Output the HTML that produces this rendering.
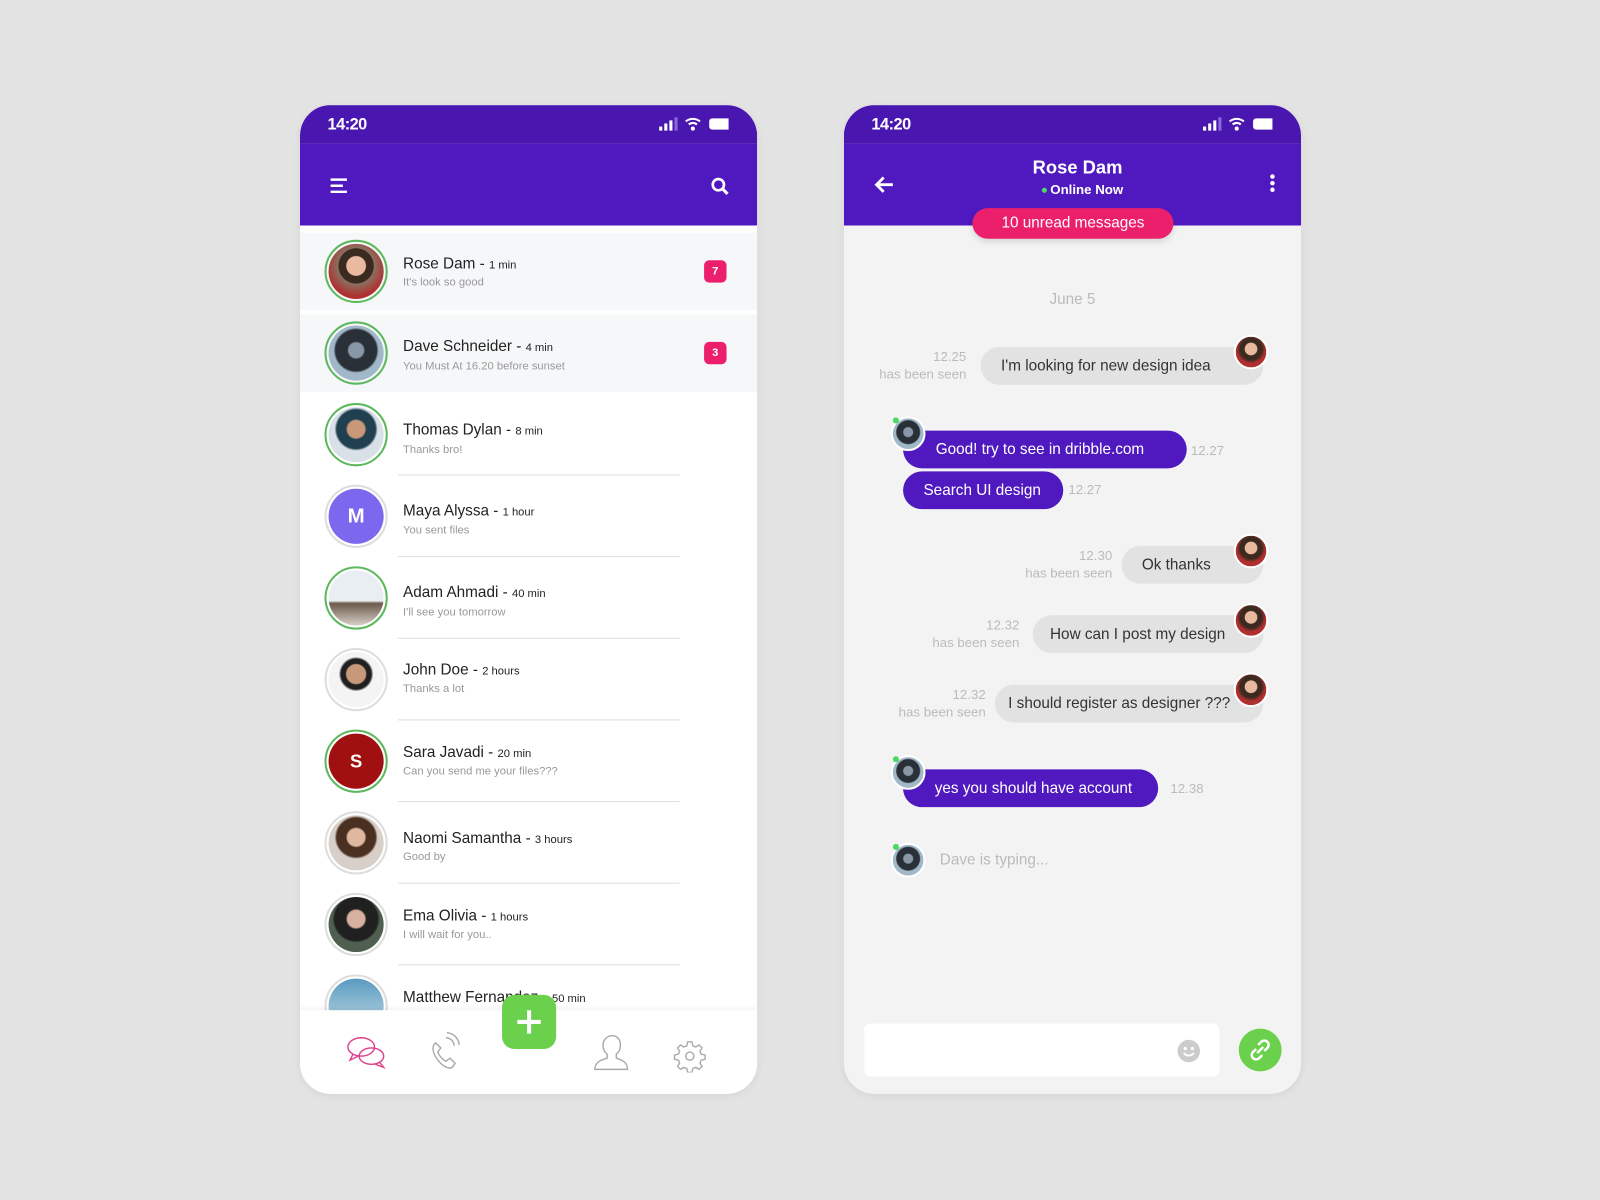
<!DOCTYPE html>
<html><head><meta charset="utf-8"><style>
*{margin:0;padding:0;box-sizing:border-box}
body{width:1600px;height:1200px;background:#e3e3e3;overflow:hidden;font-family:"Liberation Sans",sans-serif}
#w{position:absolute;left:0;top:0;width:1568px;height:1176px;transform:scale(1.020408);transform-origin:0 0}
.ph{position:absolute;top:103px;width:448px;height:969px;border-radius:30px;overflow:hidden;background:#fff;box-shadow:0 2px 8px rgba(0,0,0,.06)}
.sb{position:absolute;left:0;top:0;width:448px;height:38px;background:#4a16b0}
.hd{position:absolute;left:0;top:38px;width:448px;height:80px;background:#5019bf}
.time{position:absolute;left:27px;top:11px;color:#fff;font-weight:bold;font-size:16px;letter-spacing:-.5px}
.a{position:absolute}
.row{position:absolute;left:0;width:448px;height:76px}
.av{position:absolute;left:24px;width:62px;height:62px;border-radius:50%;border:2px solid #ddd;padding:2px}
.av.g{border-color:#5cb85c}
.av i{display:block;width:100%;height:100%;border-radius:50%}
.nm{position:absolute;left:101px;font-size:15px;color:#222}
.nm small{font-size:11px}
.sub{position:absolute;left:101px;font-size:11px;color:#999}
.dv{position:absolute;left:96px;width:276px;height:1px;background:#ddd}
.bd{position:absolute;left:396px;width:22px;height:22px;border-radius:5px;background:#ec1f6c;color:#fff;font-size:11px;font-weight:bold;text-align:center;line-height:22px}
.bub{position:absolute;height:37px;border-radius:19px;font-size:15px;line-height:37px;padding:0 20px;white-space:nowrap}
.gr{background:#e2e2e2;color:#333}
.pu{background:#5019bf;color:#fff}
.ts{position:absolute;font-size:13px;color:#bbb;text-align:right;line-height:17px}
.sav{position:absolute;width:34px;height:34px;border-radius:50%;border:2px solid #fff}
</style></head><body><div id="w">

<!-- LEFT PHONE -->
<div class="ph" style="left:294px">
 <div class="sb"></div><div class="hd"></div>
 <div class="time">14:20</div>
 <svg class="a" style="left:350px;top:10px" width="70" height="18"><rect x="2" y="11" width="3" height="4" fill="#fff"/><rect x="7" y="8" width="3" height="7" fill="#fff"/><rect x="12" y="5" width="3" height="10" fill="#fff"/><rect x="17" y="2" width="3" height="13" fill="#8a6ad8"/><path d="M28 6a11 11 0 0 1 14 0M31 9a6 6 0 0 1 8 0" stroke="#fff" stroke-width="2" fill="none"/><circle cx="35" cy="13" r="2" fill="#fff"/><rect x="51" y="3" width="25" height="11" rx="3" fill="#fff"/></svg>
 <svg class="a" style="left:28px;top:70px" width="20" height="20"><path d="M2 3h16M2 9h12M2 15h16" stroke="#fff" stroke-width="2.4"/></svg>
 <svg class="a" style="left:402px;top:70px" width="20" height="20"><circle cx="8" cy="8" r="5.5" stroke="#fff" stroke-width="2.6" fill="none"/><path d="M12 12l5 5" stroke="#fff" stroke-width="3"/></svg>
 <div class="a" style="left:0;top:125px;width:448px;height:76px;background:#f6f7f9"></div>
 <div class="a" style="left:0;top:205px;width:448px;height:76px;background:#f6f7f9"></div>

 <div class="av g" style="top:132px"><i style="background:radial-gradient(circle at 50% 40%,#e9b9a0 0 22%,#3a2a20 24% 40%,#8a7060 42%,#b03030 70%)"></i></div>
 <div class="nm" style="top:147px">Rose Dam - <small>1 min</small></div><div class="sub" style="top:168px">It's look so good</div><div class="bd" style="top:152px">7</div>
 <div class="av g" style="top:212px"><i style="background:radial-gradient(circle at 50% 45%,#8898a8 0 18%,#2a3038 22% 50%,#a0b8c8 55%)"></i></div>
 <div class="nm" style="top:228px">Dave Schneider - <small>4 min</small></div><div class="sub" style="top:250px">You Must At 16.20 before sunset</div><div class="bd" style="top:232px">3</div>

 <div class="av g" style="top:292px"><i style="background:radial-gradient(circle at 50% 40%,#c89878 0 20%,#204050 24% 45%,#d8e0e8 50%)"></i></div>
 <div class="nm" style="top:310px">Thomas Dylan - <small>8 min</small></div><div class="sub" style="top:332px">Thanks bro!</div><div class="dv" style="top:362px"></div>
 <div class="av" style="top:372px;border-color:#ddd"><i style="background:#7b68ee;color:#fff;font-weight:bold;font-size:20px;text-align:center;line-height:54px;font-style:normal">M</i></div>
 <div class="nm" style="top:389px">Maya Alyssa - <small>1 hour</small></div><div class="sub" style="top:411px">You sent files</div><div class="dv" style="top:442px"></div>
 <div class="av g" style="top:452px"><i style="background:linear-gradient(#e8eef2 0 55%,#6a5a4a 60%,#d8d0c8)"></i></div>
 <div class="nm" style="top:469px">Adam Ahmadi - <small>40 min</small></div><div class="sub" style="top:491px">I'll see you tomorrow</div><div class="dv" style="top:522px"></div>
 <div class="av" style="top:532px"><i style="background:radial-gradient(circle at 50% 40%,#c8987a 0 22%,#202020 25% 35%,#f4f4f4 40%)"></i></div>
 <div class="nm" style="top:545px">John Doe - <small>2 hours</small></div><div class="sub" style="top:566px">Thanks a lot</div><div class="dv" style="top:602px"></div>
 <div class="av" style="top:612px;border-color:#5cb85c"><i style="background:#a01010;color:#fff;font-weight:bold;font-size:18px;text-align:center;line-height:54px;font-style:normal">S</i></div>
 <div class="nm" style="top:626px">Sara Javadi - <small>20 min</small></div><div class="sub" style="top:647px">Can you send me your files???</div><div class="dv" style="top:682px"></div>
 <div class="av" style="top:692px"><i style="background:radial-gradient(circle at 50% 40%,#e0b8a0 0 20%,#4a3020 24% 45%,#d8d0c8 50%)"></i></div>
 <div class="nm" style="top:710px">Naomi Samantha - <small>3 hours</small></div><div class="sub" style="top:731px">Good by</div><div class="dv" style="top:762px"></div>
 <div class="av" style="top:772px"><i style="background:radial-gradient(circle at 50% 40%,#d8b0a0 0 20%,#202020 24% 50%,#506050 55%)"></i></div>
 <div class="nm" style="top:786px">Ema Olivia - <small>1 hours</small></div><div class="sub" style="top:807px">I will wait for you..</div><div class="dv" style="top:842px"></div>
 <div class="av" style="top:852px"><i style="background:linear-gradient(#5a9ac0,#c8e0ea)"></i></div>
 <div class="nm" style="top:866px">Matthew Fernandez - <small>50 min</small></div>

 <div class="a" style="left:0;top:887px;width:448px;height:82px;background:#fff;box-shadow:0 -2px 4px rgba(0,0,0,.05)"></div>
 <div class="a" style="left:198px;top:872px;width:53px;height:53px;border-radius:12px;background:#6bd04c"><svg width="53" height="53"><path d="M26.5 15v23M15 26.5h23" stroke="#fff" stroke-width="4"/></svg></div>
 <svg class="a" style="left:44px;top:910px" width="44" height="36" fill="none" stroke="#e0408a" stroke-width="1.4"><ellipse cx="16" cy="13" rx="13" ry="9"/><path d="M8 20l-3 6 8-4"/><ellipse cx="26" cy="22" rx="12" ry="8"/><path d="M34 28l4 5-8-3"/></svg>
 <svg class="a" style="left:126px;top:906px" width="34" height="40" fill="none" stroke="#aaa" stroke-width="1.4"><path d="M6 14c-3 3-2 10 4 17s12 8 14 5l2-3-5-5-4 3c-3-1-7-6-8-9l3-4-5-5z"/><path d="M17 8a8 8 0 0 1 8 8M18 3a13 13 0 0 1 12 12"/></svg>
 <svg class="a" style="left:286px;top:910px" width="38" height="38" fill="none" stroke="#aaa" stroke-width="1.4"><path d="M3 35h32c0-6-4-9-11-11v-4c3-2 4-5 4-9 0-5-3-9-8-9s-9 4-9 9c0 4 1 7 4 9v4C7 26 3 29 3 35z"/></svg>
 <svg class="a" style="left:366px;top:916px" width="32" height="32" fill="none" stroke="#aaa" stroke-width="1.4"><circle cx="16" cy="16" r="4"/><path d="M14 2h4l1 4 3 1 3-2 3 3-2 3 1 3 4 1v4l-4 1-1 3 2 3-3 3-3-2-3 1-1 4h-4l-1-4-3-1-3 2-3-3 2-3-1-3-4-1v-4l4-1 1-3-2-3 3-3 3 2 3-1z"/></svg>
</div>

<!-- RIGHT PHONE -->
<div class="ph" style="left:827px;background:#f3f3f3">
 <div class="sb"></div><div class="hd"></div>
 <div class="time">14:20</div>
 <svg class="a" style="left:350px;top:10px" width="70" height="18"><rect x="2" y="11" width="3" height="4" fill="#fff"/><rect x="7" y="8" width="3" height="7" fill="#fff"/><rect x="12" y="5" width="3" height="10" fill="#fff"/><rect x="17" y="2" width="3" height="13" fill="#8a6ad8"/><path d="M28 6a11 11 0 0 1 14 0M31 9a6 6 0 0 1 8 0" stroke="#fff" stroke-width="2" fill="none"/><circle cx="35" cy="13" r="2" fill="#fff"/><rect x="51" y="3" width="25" height="11" rx="3" fill="#fff"/></svg>
 <svg class="a" style="left:28px;top:68px" width="22" height="20"><path d="M20 10H4M11 3L4 10l7 7" stroke="#fff" stroke-width="2.8" fill="none"/></svg>
 <svg class="a" style="left:415px;top:66px" width="10" height="22"><circle cx="5" cy="4" r="2.2" fill="#fff"/><circle cx="5" cy="10.5" r="2.2" fill="#fff"/><circle cx="5" cy="17" r="2.2" fill="#fff"/></svg>
 <div class="a" style="left:0;top:51px;width:458px;text-align:center;color:#fff;font-weight:bold;font-size:18px">Rose Dam</div>
 <div class="a" style="left:0;top:75px;width:468px;text-align:center;color:#fff;font-weight:bold;font-size:13px"><span style="display:inline-block;width:5px;height:5px;border-radius:50%;background:#4cd964;vertical-align:middle;margin-right:3px"></span>Online Now</div>
 <div class="a" style="left:126px;top:101px;width:197px;height:30px;border-radius:15px;background:#ec1f6c;color:#fff;text-align:center;line-height:30px;font-size:15px;box-shadow:0 3px 6px rgba(0,0,0,.12)">10 unread messages</div>
 <div class="a" style="left:0;top:182px;width:448px;text-align:center;font-size:15px;color:#bbb">June 5</div>

 <div class="ts" style="left:20px;top:238px;width:100px">12.25<br>has been seen</div>
 <div class="bub gr" style="left:134px;top:237px;width:277px">I'm looking for new design idea</div>
 <div class="sav" style="left:382px;top:225px;background:radial-gradient(circle at 50% 40%,#e9b9a0 0 25%,#3a2a20 28% 45%,#b03030 60%)"></div>

 <div class="bub pu" style="left:58px;top:319px;width:278px;padding-left:32px">Good! try to see in dribble.com</div>
 <div class="sav" style="left:46px;top:305px;background:radial-gradient(circle at 50% 45%,#8898a8 0 20%,#2a3038 24% 50%,#a0b8c8 55%)"></div>
 <div class="a" style="left:48px;top:306px;width:6px;height:6px;border-radius:50%;background:#4cd964"></div>
 <div class="ts" style="left:340px;top:330px">12.27</div>
 <div class="bub pu" style="left:58px;top:359px;width:157px">Search UI design</div>
 <div class="ts" style="left:220px;top:368px">12.27</div>

 <div class="ts" style="left:163px;top:433px;width:100px">12.30<br>has been seen</div>
 <div class="bub gr" style="left:272px;top:432px;width:139px">Ok thanks</div>
 <div class="sav" style="left:382px;top:420px;background:radial-gradient(circle at 50% 40%,#e9b9a0 0 25%,#3a2a20 28% 45%,#b03030 60%)"></div>

 <div class="ts" style="left:72px;top:501px;width:100px">12.32<br>has been seen</div>
 <div class="bub gr" style="left:185px;top:500px;width:226px;padding-left:17px">How can I post my design</div>
 <div class="sav" style="left:382px;top:488px;background:radial-gradient(circle at 50% 40%,#e9b9a0 0 25%,#3a2a20 28% 45%,#b03030 60%)"></div>

 <div class="ts" style="left:39px;top:569px;width:100px">12.32<br>has been seen</div>
 <div class="bub gr" style="left:148px;top:568px;width:263px;padding-left:13px">I should register as designer ???</div>
 <div class="sav" style="left:382px;top:556px;background:radial-gradient(circle at 50% 40%,#e9b9a0 0 25%,#3a2a20 28% 45%,#b03030 60%)"></div>

 <div class="bub pu" style="left:58px;top:651px;width:250px;padding-left:31px">yes you should have account</div>
 <div class="sav" style="left:46px;top:637px;background:radial-gradient(circle at 50% 45%,#8898a8 0 20%,#2a3038 24% 50%,#a0b8c8 55%)"></div>
 <div class="a" style="left:48px;top:638px;width:6px;height:6px;border-radius:50%;background:#4cd964"></div>
 <div class="ts" style="left:320px;top:661px">12.38</div>

 <div class="sav" style="left:46px;top:723px;background:radial-gradient(circle at 50% 45%,#8898a8 0 20%,#2a3038 24% 50%,#a0b8c8 55%)"></div>
 <div class="a" style="left:48px;top:724px;width:6px;height:6px;border-radius:50%;background:#4cd964"></div>
 <div class="a" style="left:94px;top:731px;font-size:15px;color:#bbb">Dave is typing...</div>

 <div class="a" style="left:20px;top:900px;width:348px;height:52px;border-radius:6px;background:#fff"></div>
 <svg class="a" style="left:326px;top:915px" width="24" height="24"><circle cx="12" cy="12" r="11" fill="#ccc"/><circle cx="8.5" cy="9.5" r="1.6" fill="#fff"/><circle cx="15.5" cy="9.5" r="1.6" fill="#fff"/><path d="M7 14q5 5 10 0" stroke="#fff" stroke-width="1.8" fill="none"/></svg>
 <div class="a" style="left:387px;top:905px;width:42px;height:42px;border-radius:50%;background:#6bd04c"><svg width="42" height="42" fill="none" stroke="#fff" stroke-width="2.4"><path d="M19 16l3-3a4 4 0 0 1 6 6l-3 3M23 26l-3 3a4 4 0 0 1-6-6l3-3M18 24l6-6"/></svg></div>
</div>
</div></body></html>
